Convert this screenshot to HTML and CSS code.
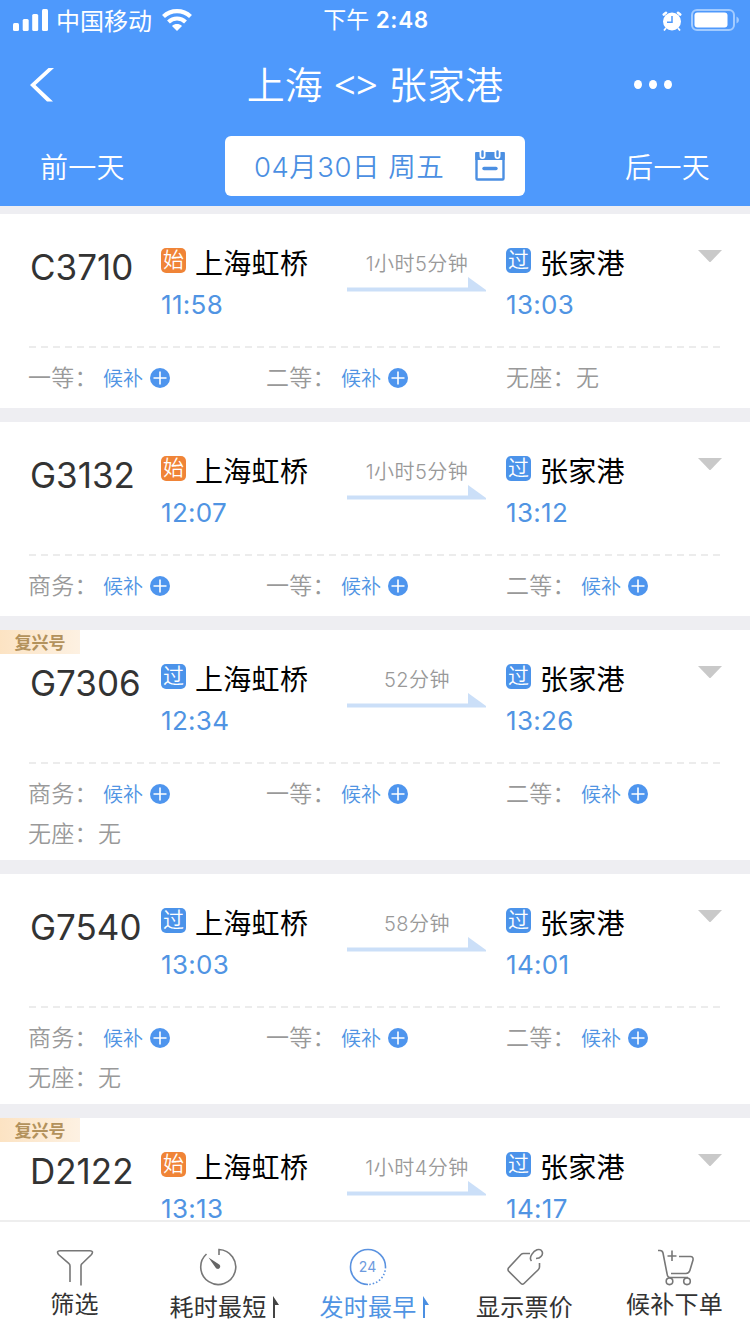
FILE: index.html
```html
<!DOCTYPE html>
<html lang="zh-CN">
<head>
    <meta charset="UTF-8">
    <meta name="viewport" content="width=device-width, initial-scale=1.0">
    <title>上海 - 张家港</title>
    <link rel="stylesheet" href="styles.css">
</head>
<body>

    <!-- Shared icons -->
    <svg class="sprite">
        <symbol id="arrow" viewBox="0 0 140 18">
            <path d="M0 11.500H121V1L139 14V15.500H0Z" fill="#cbdff8"/>
        </symbol>
        <symbol id="plus" viewBox="0 0 20 20">
            <circle cx="10" cy="10" r="10" fill="#4e95ee"/>
            <path d="M10 3.500V16.500M3.500 10H16.500" stroke="#fff" stroke-width="1.600"/>
        </symbol>
        <symbol id="caret" viewBox="0 0 24 13">
            <path d="M0 0H24L12.500 12H11.500Z" fill="#c9c9c9"/>
        </symbol>
    </svg>

    <div class="app">
        <header class="header">
            <div class="status">
                <div class="status-left">
                    <svg class="signal" viewBox="0 0 35 22">
                        <rect x="0" y="14" width="6" height="8" rx="1.500"/>
                        <rect x="9.700" y="10" width="6" height="12" rx="1.500"/>
                        <rect x="19.200" y="5" width="6" height="17" rx="1.500"/>
                        <rect x="29" y="0" width="6" height="22" rx="1.500"/>
                    </svg>
                    <span class="carrier">中国移动</span>
                    <svg class="wifi" viewBox="0 0 30 22">
                        <path d="M1.500 7.500C9 .3 21 .3 28.500 7.500" stroke-width="4.200"/>
                        <path d="M6.500 13C11.300 8.200 18.700 8.200 23.500 13" stroke-width="4"/>
                        <path class="wifi-dot" d="M10 17C12.800 14.400 17.200 14.400 20 17L15 22Z"/>
                    </svg>
                </div>
                <div class="clock">下午 <b>2:48</b></div>
                <div class="status-right">
                    <svg class="alarm" viewBox="0 0 20 20">
                        <circle cx="10" cy="10.500" r="9" fill="#fff"/>
                        <path d="M1.800 3.500L4 1.800M18.200 3.500L16 1.800" stroke="#fff" stroke-width="2.600" stroke-linecap="round"/>
                        <path d="M4 17L2 19.500M16 17L18 19.500" stroke="#fff" stroke-width="1.800"/>
                        <path d="M10 5V11.200H5" stroke="#4e99fc" stroke-width="1.500" fill="none"/>
                    </svg>
                    <svg class="battery" viewBox="0 0 48 22">
                        <rect x="1" y="1" width="42" height="20" rx="5" fill="none" stroke="#a2cbff" stroke-width="2"/>
                        <rect x="3.500" y="3.500" width="33" height="15" rx="3" fill="#fff"/>
                        <path d="M45.500 7.500Q48 8.500 48 11T45.500 14.500Z" fill="#a2cbff"/>
                    </svg>
                </div>
            </div>

            <div class="navbar">
                <svg class="back" viewBox="0 0 24 36">
                    <path d="M18.500 1H24L5.500 18L23 34.500H17L0 18Z"/>
                </svg>
                <h1 class="title">上海 <span class="swap">&lt;&gt;</span> 张家港</h1>
                <div class="more"><i></i><i></i><i></i></div>
            </div>

            <div class="datebar">
                <a class="day">前一天</a>
                <div class="date">
                    <span>04月30日 周五</span>
                    <svg class="calendar" viewBox="0 0 32 32">
                        <path d="M2.500 3V28.500Q2.500 29.500 3.500 29.500H28.500Q29.500 29.500 29.500 28.500V3" fill="none" stroke="#4b8fe2" stroke-width="2.400"/>
                        <path d="M1.300 2H30.700V10H1.300Z" fill="#4b8fe2"/>
                        <path d="M8.500 0V6M23.500 0V6" stroke="#fff" stroke-width="6" stroke-linecap="round"/>
                        <path d="M8.500 1.500V6M23.500 1.500V6" stroke="#4b8fe2" stroke-width="2.400" stroke-linecap="round"/>
                        <path d="M10 18.500H22" stroke="#4b8fe2" stroke-width="3.400" stroke-linecap="round"/>
                    </svg>
                </div>
                <a class="day">后一天</a>
            </div>
        </header>

        <main class="list">
            <section class="card">
                <div class="train">
                    <div class="number">C3710</div>
                    <div class="stop">
                        <div class="station"><span class="badge start">始</span>上海虹桥</div>
                        <div class="time">11:58</div>
                    </div>
                    <div class="duration">1小时5分钟<svg class="arrow"><use href="#arrow"/></svg></div>
                    <div class="stop">
                        <div class="station"><span class="badge">过</span>张家港</div>
                        <div class="time">13:03</div>
                    </div>
                    <svg class="caret"><use href="#caret"/></svg>
                </div>
                <div class="seats">
                    <div class="seat"><span class="seat-name">一等：</span><a>候补</a><svg><use href="#plus"/></svg></div>
                    <div class="seat"><span class="seat-name">二等：</span><a>候补</a><svg><use href="#plus"/></svg></div>
                    <div class="seat"><span class="seat-name">无座：</span>无</div>
                </div>
            </section>

            <section class="card">
                <div class="train">
                    <div class="number">G3132</div>
                    <div class="stop">
                        <div class="station"><span class="badge start">始</span>上海虹桥</div>
                        <div class="time">12:07</div>
                    </div>
                    <div class="duration">1小时5分钟<svg class="arrow"><use href="#arrow"/></svg></div>
                    <div class="stop">
                        <div class="station"><span class="badge">过</span>张家港</div>
                        <div class="time">13:12</div>
                    </div>
                    <svg class="caret"><use href="#caret"/></svg>
                </div>
                <div class="seats">
                    <div class="seat"><span class="seat-name">商务：</span><a>候补</a><svg><use href="#plus"/></svg></div>
                    <div class="seat"><span class="seat-name">一等：</span><a>候补</a><svg><use href="#plus"/></svg></div>
                    <div class="seat"><span class="seat-name">二等：</span><a>候补</a><svg><use href="#plus"/></svg></div>
                </div>
            </section>

            <section class="card">
                <span class="tag">复兴号</span>
                <div class="train">
                    <div class="number">G7306</div>
                    <div class="stop">
                        <div class="station"><span class="badge">过</span>上海虹桥</div>
                        <div class="time">12:34</div>
                    </div>
                    <div class="duration">52分钟<svg class="arrow"><use href="#arrow"/></svg></div>
                    <div class="stop">
                        <div class="station"><span class="badge">过</span>张家港</div>
                        <div class="time">13:26</div>
                    </div>
                    <svg class="caret"><use href="#caret"/></svg>
                </div>
                <div class="seats">
                    <div class="seat"><span class="seat-name">商务：</span><a>候补</a><svg><use href="#plus"/></svg></div>
                    <div class="seat"><span class="seat-name">一等：</span><a>候补</a><svg><use href="#plus"/></svg></div>
                    <div class="seat"><span class="seat-name">二等：</span><a>候补</a><svg><use href="#plus"/></svg></div>
                    <div class="seat"><span class="seat-name">无座：</span>无</div>
                </div>
            </section>

            <section class="card">
                <div class="train">
                    <div class="number">G7540</div>
                    <div class="stop">
                        <div class="station"><span class="badge">过</span>上海虹桥</div>
                        <div class="time">13:03</div>
                    </div>
                    <div class="duration">58分钟<svg class="arrow"><use href="#arrow"/></svg></div>
                    <div class="stop">
                        <div class="station"><span class="badge">过</span>张家港</div>
                        <div class="time">14:01</div>
                    </div>
                    <svg class="caret"><use href="#caret"/></svg>
                </div>
                <div class="seats">
                    <div class="seat"><span class="seat-name">商务：</span><a>候补</a><svg><use href="#plus"/></svg></div>
                    <div class="seat"><span class="seat-name">一等：</span><a>候补</a><svg><use href="#plus"/></svg></div>
                    <div class="seat"><span class="seat-name">二等：</span><a>候补</a><svg><use href="#plus"/></svg></div>
                    <div class="seat"><span class="seat-name">无座：</span>无</div>
                </div>
            </section>

            <section class="card">
                <span class="tag">复兴号</span>
                <div class="train">
                    <div class="number">D2122</div>
                    <div class="stop">
                        <div class="station"><span class="badge start">始</span>上海虹桥</div>
                        <div class="time">13:13</div>
                    </div>
                    <div class="duration">1小时4分钟<svg class="arrow"><use href="#arrow"/></svg></div>
                    <div class="stop">
                        <div class="station"><span class="badge">过</span>张家港</div>
                        <div class="time">14:17</div>
                    </div>
                    <svg class="caret"><use href="#caret"/></svg>
                </div>
            </section>
        </main>

        <nav class="tabbar">
            <a class="tab">
                <svg class="tab-icon" viewBox="0 0 38 38">
                    <path d="M14 34V18Q14 16.500 13 15.700L2.500 6.500Q0 3 4 2.700H34Q38 3 35.500 6.500L26 15.700Q25 16.500 25 18V37.500"/>
                </svg>
                <span>筛选</span>
            </a>
            <a class="tab low sort">
                <svg class="tab-icon" viewBox="0 0 38 38">
                    <path d="M20 7V1.500A17.500 17.500 0 1 1 7.500 6"/>
                    <path d="M9.500 9.500L19.500 16A2.500 2.500 0 1 1 16.500 19.500Z" fill="#666" stroke="none"/>
                </svg>
                <span>耗时最短<svg class="flag" viewBox="0 0 6 22"><path d="M0 0L6 9H2V22H0Z"/></svg></span>
            </a>
            <a class="tab low sort active">
                <svg class="tab-icon" viewBox="0 0 38 38">
                    <path d="M19 36.500A17.500 17.500 0 1 1 36.500 19"/>
                    <path d="M36.500 19A17.500 17.500 0 0 1 19 36.500" stroke-dasharray="1.500 2"/>
                    <text x="18.500" y="24" text-anchor="middle">24</text>
                </svg>
                <span>发时最早<svg class="flag" viewBox="0 0 6 22"><path d="M0 0L6 9H2V22H0Z"/></svg></span>
            </a>
            <a class="tab low">
                <svg class="tab-icon" viewBox="0 0 38 38">
                    <path d="M24 5.500H17.500Q16 5.500 15 6.500L2.500 20Q1.500 21.500 2.500 23L15 35.500Q16.500 37 18 35.500L32 22Q33.500 20.500 33.500 19V15"/>
                    <path d="M25.500 13C22 9 28 3 31 1.800C36 .5 38 5 35 8.500Q33.500 10.500 30 10.500"/>
                </svg>
                <span>显示票价</span>
            </a>
            <a class="tab">
                <svg class="tab-icon" viewBox="0 0 38 38">
                    <path d="M2 2.500H4Q6.500 2.500 7 5L11 25.500Q11.500 29.500 14 29.500H32M15 25.500H30Q33 25.500 34 22L37 12Q37.500 8.500 34.500 8.500H23M16 2.500V13M11.500 8H20.500"/>
                    <circle cx="13.500" cy="33.300" r="3.300"/>
                    <circle cx="31" cy="33.300" r="3.300"/>
                </svg>
                <span>候补下单</span>
            </a>
        </nav>
    </div>

</body>
</html>
```
FILE: styles.css
```css
* {
    box-sizing: border-box;
}

body {
    margin: 0;
    font-family: Inter, 'Noto Sans CJK SC', sans-serif;
    background-color: #eeeef2;
    color: #000;
}

svg {
    display: block;
    flex-shrink: 0;
}

.sprite {
    display: none;
}

.app {
    display: flex;
    flex-direction: column;
    width: 750px;
    height: 1334px;
    overflow: hidden;
}

/* Header */
.header {
    height: 206px;
    flex-shrink: 0;
    background-color: #4e99fc;
    color: #fff;
}

.status {
    display: grid;
    grid-template-columns: 1fr auto 1fr;
    align-items: center;
    height: 42px;
    padding: 0 11px 0 13px;
    font-size: 24px;
    line-height: 40px;
}

.status-left,
.status-right {
    display: flex;
    align-items: center;
}

.status-right {
    justify-content: flex-end;
    gap: 9px;
}

.signal {
    width: 35px;
    height: 22px;
    margin: 0 8px 2px 0;
    fill: #fff;
}

.carrier {
    padding-top: 1px;
}

.wifi {
    width: 30px;
    height: 22px;
    margin: 0 0 3px 10px;
    fill: none;
    stroke: #fff;
}

.wifi .wifi-dot {
    fill: #fff;
    stroke: none;
}

.clock {
    padding-bottom: 2px;
    font-size: 23px;
}

.clock b {
    font-size: 22.5px;
    font-weight: 600;
    letter-spacing: 0.6px;
}

.alarm {
    width: 20px;
    height: 20px;
    margin-bottom: 1px;
}

.battery {
    width: 48px;
    height: 22px;
    margin-bottom: 2px;
}

.navbar {
    display: grid;
    grid-template-columns: 120px 1fr 120px;
    align-items: center;
    height: 84px;
    padding-left: 30px;
}

.back {
    width: 24px;
    height: 36px;
    fill: #fff;
}

.title {
    margin: 0;
    padding-right: 30px;
    font-size: 38px;
    font-weight: 350;
    line-height: 84px;
    text-align: center;
    letter-spacing: 0.2px;
    white-space: nowrap;
}

.swap {
    font-family: 'Open Sans', sans-serif;
    font-weight: 400;
}

.more {
    display: flex;
    gap: 7px;
    margin-left: 4px;
}

.more i {
    width: 8px;
    height: 9px;
    border-radius: 50%;
    background-color: #fff;
}

.datebar {
    display: flex;
    align-items: center;
    justify-content: space-between;
    padding: 10px 40px 0;
}

.day {
    font-size: 28px;
    font-weight: 350;
    letter-spacing: 0.3px;
}

.date {
    display: flex;
    align-items: center;
    justify-content: space-between;
    width: 300px;
    height: 60px;
    padding: 0 19px 0 29px;
    border-radius: 6px;
    background-color: #fff;
    color: #4b8fe2;
    font-size: 27.5px;
    font-weight: 350;
    white-space: nowrap;
}

.date span {
    margin-top: -2px;
    letter-spacing: 0.5px;
}

.calendar {
    width: 32px;
    height: 32px;
}

/* Train list */
.list {
    display: flex;
    flex: 1;
    flex-direction: column;
    gap: 14px;
    min-height: 0;
    padding-top: 8px;
    overflow: hidden;
}

.card {
    position: relative;
    flex-shrink: 0;
    min-height: 194px;
    background-color: #fff;
}

.train {
    display: grid;
    grid-template-columns: 131px 186px 159px 192px 24px;
    height: 132px;
    padding: 26px 0 0 30px;
}

.number {
    color: #333;
    font-size: 35px;
    line-height: 54px;
}

.station {
    display: flex;
    align-items: center;
    height: 44px;
    font-size: 28px;
    letter-spacing: 0.3px;
}

.badge {
    width: 25px;
    height: 25px;
    margin: 0 9px 4px 0;
    border-radius: 5px;
    background-color: #4b93ea;
    color: #fff;
    font-size: 21px;
    font-weight: 350;
    line-height: 24px;
    letter-spacing: 0;
    text-align: center;
}

.badge.start {
    background-color: #f08437;
}

.time {
    color: #5094e3;
    font-size: 26px;
    line-height: 42px;
    letter-spacing: 0.3px;
}

.duration {
    width: 140px;
    color: #999;
    font-size: 20px;
    font-weight: 350;
    line-height: 48px;
    letter-spacing: 0.5px;
    text-align: center;
}

.arrow {
    width: 140px;
    height: 18px;
    margin-top: -12px;
}

.caret {
    width: 24px;
    height: 13px;
    margin-top: 10px;
}

/* Seats */
.seats {
    display: grid;
    grid-template-columns: 238px 240px 1fr;
    grid-auto-rows: 40px;
    margin-left: 28px;
    padding: 12px 0 6px;
    position: relative;
}

.seats::before {
    content: '';
    position: absolute;
    top: 0;
    left: 1px;
    width: 692px;
    height: 2px;
    background: repeating-linear-gradient(90deg, #ececec 0 7px, transparent 7px 12px);
}

.seat {
    display: flex;
    align-items: center;
    color: #999;
    font-size: 23px;
    font-weight: 350;
    line-height: 36px;
}

.seat-name {
    width: 70px;
    letter-spacing: 0.3px;
    white-space: nowrap;
}

.seat a {
    margin: 2px 7px 0 5px;
    color: #5094e3;
    font-size: 20px;
}

.seat svg {
    width: 20px;
    height: 20px;
}

.tag {
    position: absolute;
    top: 0;
    left: 0;
    width: 80px;
    height: 24px;
    background: linear-gradient(90deg, #fce3c3, #fdf1e2);
    color: #b3925c;
    font-size: 17px;
    font-weight: 700;
    line-height: 27px;
    text-align: center;
}

/* Bottom bar */
.tabbar {
    display: flex;
    flex-shrink: 0;
    height: 114px;
    border-top: 2px solid #eee;
    background-color: #fff;
}

.tab {
    display: flex;
    flex: 1;
    flex-direction: column;
    align-items: center;
    padding: 26px 1px 0 0;
    color: #333;
    font-size: 24px;
    line-height: 38px;
}

.tab.low span {
    margin-top: 3px;
}

.tab span {
    display: flex;
    align-items: center;
    letter-spacing: 0.2px;
    white-space: nowrap;
}

.tab-icon {
    width: 38px;
    height: 38px;
    fill: none;
    stroke: #777;
    stroke-width: 1.6;
}

.sort .tab-icon {
    margin-right: 13px;
}

.tab-icon text {
    fill: #6d9ade;
    stroke: none;
    font-size: 14px;
}

.flag {
    width: 6px;
    height: 22px;
    margin: 0 0 3px 7px;
    fill: #444;
}

.active {
    color: #5094e3;
}

.active .tab-icon {
    stroke: #5a92e0;
}

.active .flag {
    fill: #4b8fe2;
}
```
